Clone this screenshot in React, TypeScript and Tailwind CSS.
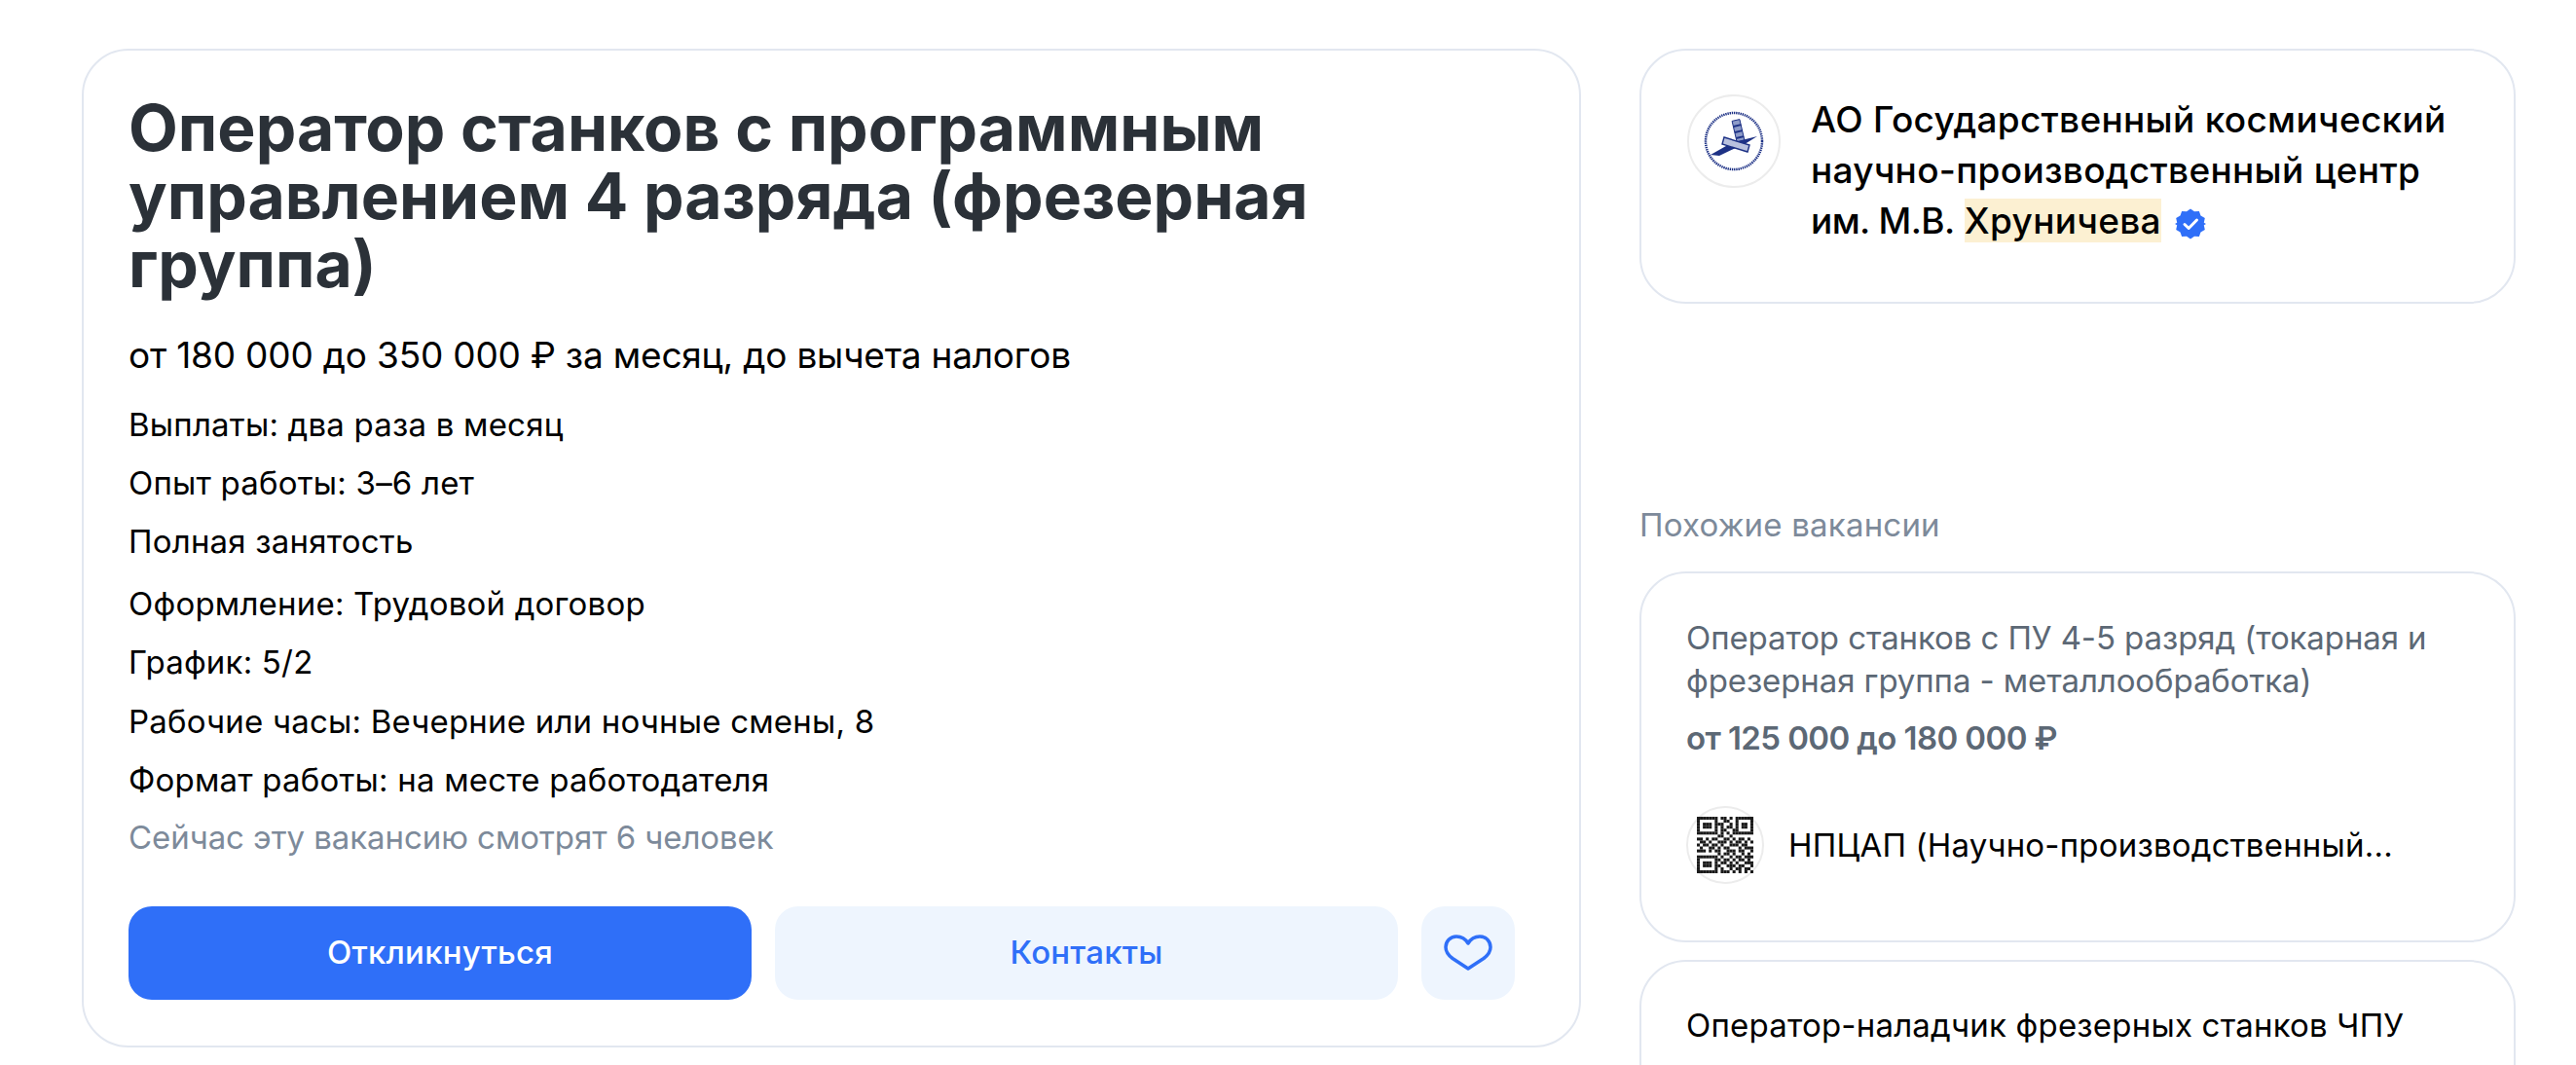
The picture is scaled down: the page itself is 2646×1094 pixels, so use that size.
import React from 'react';

const details = [
  { text: 'Выплаты: два раза в месяц', mt: 'mt-[26px]' },
  { text: 'Опыт работы: 3–6 лет', mt: 'mt-[16px]' },
  { text: 'Полная занятость', mt: 'mt-[16px]' },
  { text: 'Оформление: Трудовой договор', mt: 'mt-[20px]' },
  { text: 'График: 5/2', mt: 'mt-[16px]' },
  { text: 'Рабочие часы: Вечерние или ночные смены, 8', mt: 'mt-[17px]' },
  { text: 'Формат работы: на месте работодателя', mt: 'mt-[16px]' },
];

const qrRows = [
  '1111111011010111111',
  '1000001001100100001',
  '1011101110010101101',
  '1011101010110101101',
  '1000001011001100001',
  '1111111010101111111',
  '0000000110010000000',
  '1101011001101011010',
  '0110100111010110101',
  '1011011010011101100',
  '0100110101100010111',
  '1110101100111011001',
  '0000000101101001010',
  '1111111010010110111',
  '1000001101101011010',
  '1011101011010100111',
  '1011101100111011001',
  '1000001010010110110',
  '1111111011101010101',
];

const QrLogo = () => (
  <div className="flex h-[80px] w-[80px] shrink-0 items-center justify-center rounded-full border-2 border-[#ececec] bg-white">
    <svg width="58" height="58" viewBox="0 0 19 19">
      {qrRows.map((row, y) =>
        row.split('').map((c, x) => (c === '1' ? <rect key={`${x}-${y}`} x={x} y={y} width="1" height="1" fill="#1a1a1a" /> : null)),
      )}
    </svg>
  </div>
);

const SpaceLogo = () => (
  <div className="flex h-[96px] w-[96px] shrink-0 items-center justify-center rounded-full border-2 border-[#ececec] bg-white">
    <svg width="70" height="70" viewBox="0 0 70 70">
      <circle cx="35" cy="35" r="29" fill="none" stroke="#1d3185" strokeWidth="2.500" strokeDasharray="1.400 0.800" />
      <path d="M40.900 12.600L33.100 14.400 38.100 35.900 45.900 34.100z" fill="#8d9bc8" stroke="#1d3185" strokeWidth="1" />
      <path d="M34.500 20l7.800-1.800M36 26l7.800-1.800M37.300 32l7.800-1.800" stroke="#1d3185" strokeWidth="1.800" />
      <path d="M11 49l23-13 5 5-19 9zM59 30l-20 5 4 5z" fill="#1d3185" />
      <path d="M25 31l26 8-2 7-26-8z" fill="#b9c1de" stroke="#1d3185" strokeWidth="1.400" />
    </svg>
  </div>
);

const Badge = () => (
  <svg width="32" height="32" viewBox="0 0 32 32" className="ml-[14px] inline-block align-[-6px]">
    <path
      d="M16 .500l4 2.800 4.900-.3 1.600 4.600 4.300 2.300-1 4.800L32 16l-2.200 1.300 1 4.800-4.300 2.300-1.600 4.600-4.900-.3-4 2.800-4-2.800-4.900.3-1.600-4.600-4.300-2.300 1-4.800L0 16l2.200-1.300-1-4.800 4.300-2.300L7.100 3l4.900.3z"
      fill="#2f6ff8"
    />
    <path d="M10 16.500l4.200 4L22.500 12" fill="none" stroke="#fff" strokeWidth="3" strokeLinecap="round" strokeLinejoin="round" />
  </svg>
);

export default function App() {
  return (
    <div className="flex h-[1094px] items-start gap-[60px] overflow-hidden bg-white pl-[84px] pt-[50px] font-['Inter',sans-serif] text-black">
      <div className="h-[1026px] w-[1540px] shrink-0 rounded-[48px] border-2 border-[#e2e7f0] px-[46px] pt-[44px]">
        <h1 className="w-[1300px] text-[66px] font-bold leading-[70px] text-[#2b3138]">
          Оператор станков с программным управлением 4 разряда (фрезерная группа)
        </h1>
        <p className="mt-[36px] text-[37px] leading-[46px] tracking-[-0.2px]">от 180 000 до 350 000 ₽ за месяц, до вычета налогов</p>
        {details.map(d => (
          <p key={d.text} className={`${d.mt} text-[33px] leading-[44px] tracking-[0.2px]`}>
            {d.text}
          </p>
        ))}
        <p className="mt-[15px] text-[33px] leading-[44px] tracking-[-0.07px] text-[#7d8a9a]">Сейчас эту вакансию смотрят 6 человек</p>
        <div className="mt-[49px] flex gap-[24px]">
          <button className="h-[96px] w-[640px] rounded-[24px] bg-[#2f6ff8] text-[33px] font-medium tracking-[0.2px] text-white">Откликнуться</button>
          <button className="h-[96px] w-[640px] rounded-[24px] bg-[#eef5fe] text-[33px] font-medium tracking-[0.2px] text-[#2f6ff8]">Контакты</button>
          <button className="flex h-[96px] w-[96px] items-center justify-center rounded-[24px] bg-[#eef5fe]">
            <svg width="50" height="38" viewBox="0 0 50 38" fill="none">
              <path
                d="M25 9C22 4 18 2 13 2 6.500 2 2 7 2 13c0 5 3 8.500 7 11.500L25 35l16-10.500c4-3 7-6.500 7-11.500 0-6-4.500-11-11-11-5 0-9 2-12 7z"
                stroke="#2f6ff8"
                strokeWidth="3.500"
                strokeLinejoin="round"
              />
            </svg>
          </button>
        </div>
      </div>

      <div className="flex w-[900px] shrink-0 flex-col">
        <div className="flex h-[262px] gap-[31px] rounded-[48px] border-2 border-[#e2e7f0] px-[47px] pt-[45px]">
          <SpaceLogo />
          <p className="w-[680px] text-[37px] font-medium leading-[52px] tracking-[0.3px]">
            АО Государственный космический научно-производственный центр <span className="tracking-[-0.6px]">им. М.В.</span>{' '}
            <span className="bg-[#fcf0d2]">Хруничева</span>
            <Badge />
          </p>
        </div>

        <p className="mt-[205px] text-[33px] leading-[44px] tracking-[0.2px] text-[#7d8a9a]">Похожие вакансии</p>

        <div className="mt-[26px] h-[381px] rounded-[48px] border-2 border-[#e2e7f0] px-[46px] pt-[44px]">
          <p className="text-[33px] leading-[44px] tracking-[-0.1px] text-[#5c6875]">
            Оператор станков с ПУ 4-5 разряд (токарная и фрезерная группа - металлообработка)
          </p>
          <p className="mt-[15px] text-[33px] font-semibold leading-[44px] tracking-[-0.6px] text-[#5c6875]">от 125 000 до 180 000 ₽</p>
          <div className="mt-[48px] flex items-center gap-[25px]">
            <QrLogo />
            <p className="truncate text-[33px] leading-[44px] tracking-[0.2px]">НПЦАП (Научно-производственный...</p>
          </div>
        </div>

        <div className="mt-[18px] h-[200px] rounded-[48px] border-2 border-[#e2e7f0] px-[46px] pt-[43px]">
          <p className="text-[33px] leading-[44px] tracking-[0.2px]">Оператор-наладчик фрезерных станков ЧПУ</p>
        </div>
      </div>
    </div>
  );
}
